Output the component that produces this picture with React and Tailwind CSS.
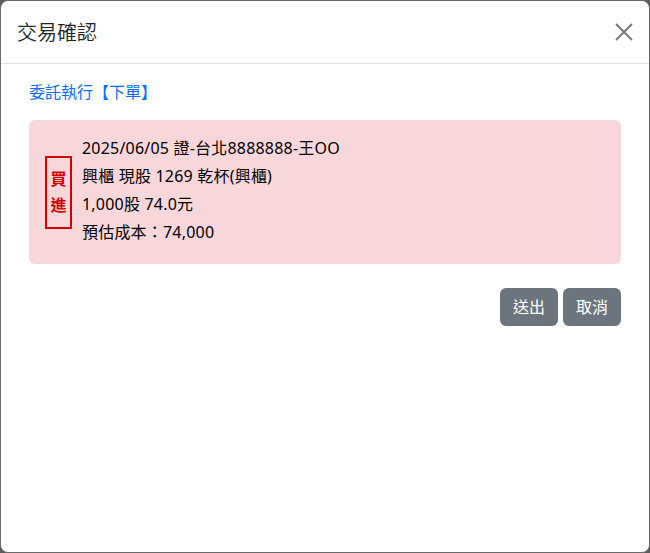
export default function App() {
  const font = { fontFamily: '"Noto Sans", "Noto Sans CJK TC", sans-serif' };
  return (
    <div className="w-[650px] h-[553px] bg-[#5c5c5c]" style={font}>
      <div className="w-[650px] h-[553px] bg-white rounded-[8px] border border-[#6b6b6b] flex flex-col">
        <div className="flex items-center justify-between h-[63px] px-4 border-b border-[#dee2e6]">
          <h5 className="text-[20px] leading-[30px] text-[#212529] font-normal" style={{ fontFamily: '"Noto Sans CJK TC", sans-serif', fontWeight: 350 }}>交易確認</h5>
          <button className="w-[18px] h-[18px] flex items-center justify-center">
            <svg width="18" height="18" viewBox="0 0 18 18">
              <path d="M1 1 L17 17 M17 1 L1 17" stroke="#747474" strokeWidth="1.8" fill="none" />
            </svg>
          </button>
        </div>
        <div className="px-[28px] pt-[16px]">
          <div className="text-[#0d6efd] text-[16px] leading-[24px]">委託執行【下單】</div>
          <div className="mt-[16px] bg-[#f8d7da] rounded-[6px] px-4 pt-[14px] pb-[18px] flex items-center">
            <div className="mt-[4px] w-[27px] h-[73px] border-2 border-[#d40000] text-[#d40000] font-bold text-[16px] leading-[26px] flex flex-col items-center justify-center">
              <span>買</span>
              <span>進</span>
            </div>
            <div className="ml-[10px] text-[16px] leading-[28px] text-black tracking-[0.2px]">
              <div>2025/06/05 證-台北8888888-王OO</div>
              <div>興櫃 現股 1269 乾杯(興櫃)</div>
              <div>1,000股 74.0元</div>
              <div>預估成本：74,000</div>
            </div>
          </div>
          <div className="mt-[24px] flex justify-end gap-[5px]">
            <button className="h-[38px] w-[58px] rounded-[6px] bg-[#6c757d] text-white text-[16px]">送出</button>
            <button className="h-[38px] w-[58px] rounded-[6px] bg-[#6c757d] text-white text-[16px]">取消</button>
          </div>
        </div>
      </div>
    </div>
  );
}
